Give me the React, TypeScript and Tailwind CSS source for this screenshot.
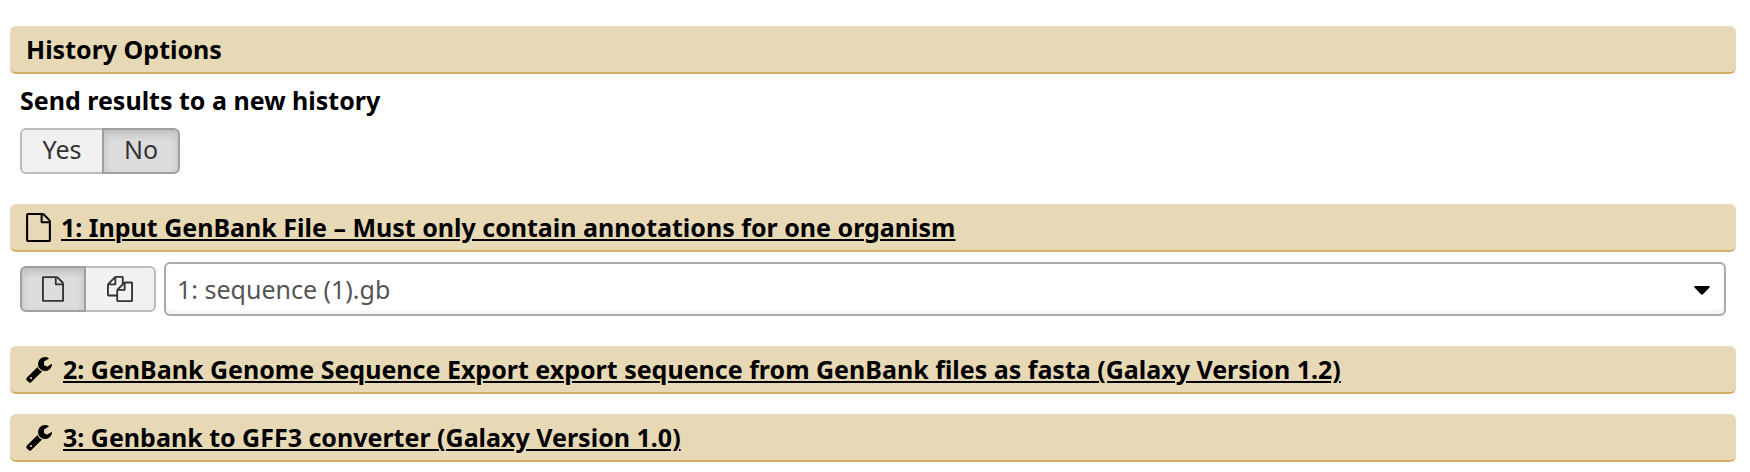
import { useState } from "react";
import type { ReactNode } from "react";

function FileIcon({ className }: { className: string }) {
  return (
    <svg viewBox="0 0 1536 1792" className={className} fill="currentColor" aria-hidden="true">
      <path d="M1468 380q28 28 48 76t20 88v1152q0 40-28 68t-68 28h-1344q-40 0-68-28t-28-68v-1600q0-40 28-68t68-28h896q40 0 88 20t76 48zm-444-244v376h376q-10-29-22-41l-313-313q-12-12-41-22zm384 1528v-1024h-416q-40 0-68-28t-28-68v-416h-768v1536h1280z" />
    </svg>
  );
}

function FilesIcon({ className }: { className: string }) {
  return (
    <svg viewBox="0 0 1792 1792" className={className} fill="currentColor" aria-hidden="true">
      <path d="M1696 384q40 0 68 28t28 68v1216q0 40-28 68t-68 28h-960q-40 0-68-28t-28-68v-288h-544q-40 0-68-28t-28-68v-672q0-40 20-88t48-76l408-408q28-28 76-48t88-20h416q40 0 68 28t28 68v328q68-40 128-40h416zm-544 213l-299 299h299v-299zm-640-384l-299 299h299v-299zm196 647l316-316v-416h-384v416q0 40-28 68t-68 28h-416v640h512v-256q0-40 20-88t48-76zm956 804v-1152h-384v416q0 40-28 68t-68 28h-416v640h896z" />
    </svg>
  );
}

function WrenchIcon({ className }: { className: string }) {
  return (
    <svg viewBox="64 64 1728 1728" className={className} fill="currentColor" aria-hidden="true">
      <path d="M448 1472q0-26-19-45t-45-19-45 19-19 45 19 45 45 19 45-19 19-45zm644-420l-682 682q-37 37-90 37-52 0-91-37l-106-108q-38-36-38-90 0-53 38-91l681-681q39 98 114.500 173.500t173.500 114.500zm634-435q0 39-23 106-47 134-164.500 217.500t-258.500 83.500q-185 0-316.500-131.500t-131.500-316.500 131.500-316.500 316.500-131.500q58 0 121.500 16.500t107.500 46.500q16 11 16 28t-16 28l-293 169v224l193 107q5-3 79-48.500t135.500-81 70.500-35.500q15 0 23.500 10t8.500 25z" />
    </svg>
  );
}

function Bar({ children }: { children: ReactNode }) {
  return (
    <div className="flex h-12 items-center rounded-md border-b-2 border-[#d0b06c] bg-[#e7d9b6] px-4">
      {children}
    </div>
  );
}

function StepBar({ icon, title }: { icon: ReactNode; title: string }) {
  return (
    <Bar>
      <h2 className="font-bold">
        <a href="#step" className="flex items-center gap-2.5">
          {icon}
          <span className="underline decoration-2 underline-offset-2">{title}</span>
        </a>
      </h2>
    </Bar>
  );
}

function Segment({
  active,
  first,
  label,
  className,
  onClick,
  children,
}: {
  active: boolean;
  first?: boolean;
  label?: string;
  className: string;
  onClick: () => void;
  children: ReactNode;
}) {
  const side = first ? "rounded-l-md" : "-ml-0.5 rounded-r-md";
  const tone = active
    ? "z-10 border-[#9f9f9f] bg-[#dddddd] shadow-[inset_0_4px_8px_rgba(0,0,0,0.15)]"
    : "border-[#bdbdbd] bg-[#f1f1f1]";
  return (
    <button
      type="button"
      aria-pressed={active}
      aria-label={label}
      onClick={onClick}
      className={`relative flex h-[46px] items-center justify-center border-2 text-[#333333] ${side} ${tone} ${className}`}
    >
      {children}
    </button>
  );
}

export default function App() {
  const [send, setSend] = useState(false);
  const [multiple, setMultiple] = useState(false);

  return (
    <main className="bg-white pt-[26px] pr-3.5 pb-2.5 pl-2.5 font-['Noto_Sans','Open_Sans',sans-serif] text-[25px] leading-8 text-black">
      <section className="mb-[30px]">
        <Bar>
          <h2 className="font-bold">History Options</h2>
        </Bar>
        <div className="px-2.5 pt-2.5">
          <p id="send-label" className="mb-3 font-bold">
            Send results to a new history
          </p>
          <div role="group" aria-labelledby="send-label" className="flex">
            <Segment first active={send} onClick={() => setSend(true)} className="w-[84px] pb-1">
              Yes
            </Segment>
            <Segment active={!send} onClick={() => setSend(false)} className="w-[78px] pb-1">
              No
            </Segment>
          </div>
        </div>
      </section>

      <section className="mb-[30px]">
        <StepBar
          icon={<FileIcon className="h-[29px] w-[25px]" />}
          title="1: Input GenBank File – Must only contain annotations for one organism"
        />
        <div className="flex items-center gap-2 px-2.5 pt-2.5">
          <div role="group" aria-label="Input type" className="flex">
            <Segment
              first
              active={!multiple}
              label="Single dataset"
              onClick={() => setMultiple(false)}
              className="w-[66px]"
            >
              <FileIcon className="h-[26px] w-[22px]" />
            </Segment>
            <Segment
              active={multiple}
              label="Multiple datasets"
              onClick={() => setMultiple(true)}
              className="w-[72px]"
            >
              <FilesIcon className="size-[26px]" />
            </Segment>
          </div>
          <div className="relative flex-1">
            <select
              aria-label="Input dataset"
              className="block h-[54px] w-full appearance-none rounded-md border-2 border-[#aaaaaa] bg-white px-[11px] text-[#555555] shadow-[inset_0_-3px_4px_rgba(0,0,0,0.06)]"
            >
              <option>1: sequence (1).gb</option>
            </select>
            <svg
              viewBox="0 0 16 9"
              className="pointer-events-none absolute top-6 right-4 h-[9px] w-4"
              aria-hidden="true"
            >
              <path d="M1 0H15Q16.500 0.500 15.500 1.500L9 8.300Q8 9.200 7 8.300L0.500 1.500Q-0.500 0.500 1 0Z" />
            </svg>
          </div>
        </div>
      </section>

      <div className="flex flex-col gap-5">
        <StepBar
          icon={<WrenchIcon className="size-[27px]" />}
          title="2: GenBank Genome Sequence Export export sequence from GenBank files as fasta (Galaxy Version 1.2)"
        />
        <StepBar
          icon={<WrenchIcon className="size-[27px]" />}
          title="3: Genbank to GFF3 converter (Galaxy Version 1.0)"
        />
      </div>
    </main>
  );
}
